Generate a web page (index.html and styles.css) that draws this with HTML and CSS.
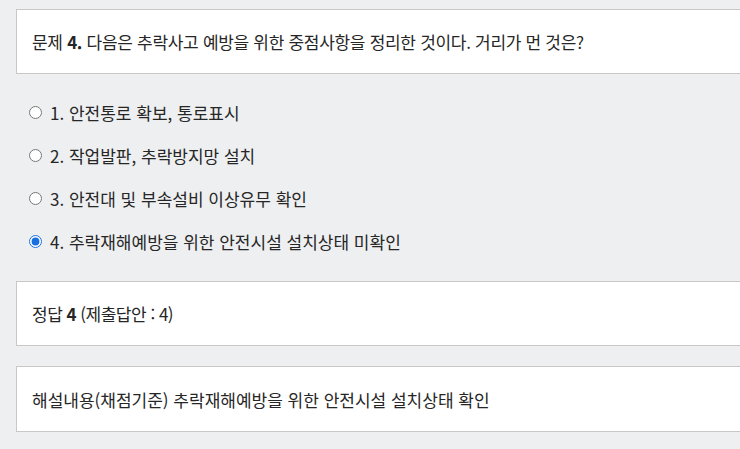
FILE: index.html
```html
<!DOCTYPE html>
<html lang="ko">
<head>
<meta charset="utf-8">
<link rel="stylesheet" href="styles.css">
</head>
<body>
<div class="page">
  <div class="box question"><span class="text">문제 <b>4.</b> 다음은 추락사고 예방을 위한 중점사항을 정리한 것이다. 거리가 먼 것은?</span></div>
  <ul class="options">
    <li class="option"><input type="radio" name="q4" class="radio"><span class="text">1. 안전통로 확보, 통로표시</span></li>
    <li class="option"><input type="radio" name="q4" class="radio"><span class="text">2. 작업발판, 추락방지망 설치</span></li>
    <li class="option"><input type="radio" name="q4" class="radio"><span class="text">3. 안전대 및 부속설비 이상유무 확인</span></li>
    <li class="option"><input type="radio" name="q4" class="radio" checked><span class="text">4. 추락재해예방을 위한 안전시설 설치상태 미확인</span></li>
  </ul>
  <div class="box answer"><span class="text">정답 <b>4</b> (제출답안 : 4)</span></div>
  <div class="box explain"><span class="text">해설내용(채점기준) 추락재해예방을 위한 안전시설 설치상태 확인</span></div>
</div>
</body>
</html>
```

FILE: styles.css
```css
html, body {
  margin: 0;
  padding: 0;
  background: #eeeff1;
}
body {
  font-family: "Noto Sans CJK KR", "Noto Sans", sans-serif;
  color: #262626;
  font-size: 17px;
}
.page {
  padding: 9px 0 0 16px;
}
.box {
  background: #fff;
  border: 1px solid #c8c8c8;
  border-right: none;
  padding: 0 15px;
  display: flex;
  align-items: center;
  white-space: nowrap;
}
.box b {
  font-weight: 700;
}
.text {
  white-space: pre;
}
.question {
  height: 63px;
  letter-spacing: -0.3px;
}
.options {
  list-style: none;
  margin: 0;
  padding: 17px 0 0 0;
}
.option {
  height: 43px;
  display: flex;
  align-items: center;
}
.radio {
  width: 13px;
  height: 13px;
  margin: 0 8px 0 13px;
  accent-color: #1a6fe0;
}
.answer {
  margin-top: 18px;
  height: 63px;
  letter-spacing: -0.5px;
}
.explain {
  margin-top: 20px;
  height: 64px;
}
```
